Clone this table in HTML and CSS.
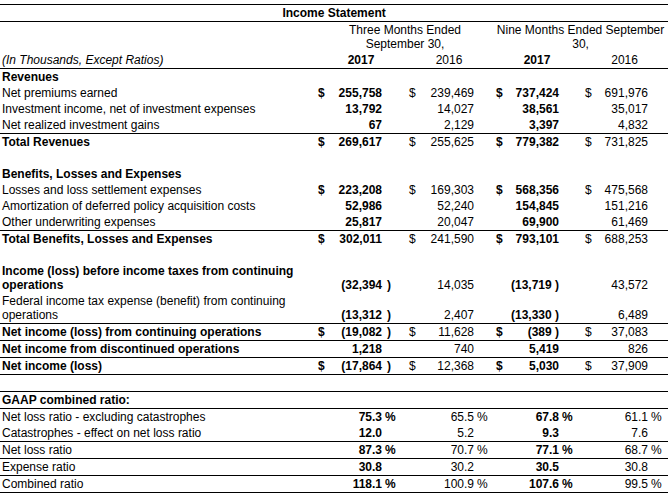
FILE: index.html
```html
<!DOCTYPE html>
<html>
<head>
<meta charset="utf-8">
<link rel="stylesheet" href="styles.css">
</head>
<body>
<table class="stmt">
<colgroup>
<col class="c-label"><col class="c-d1"><col class="c-n1"><col class="c-s1">
<col class="c-d2"><col class="c-n2"><col class="c-s2">
<col class="c-d3"><col class="c-n3"><col class="c-s3">
<col class="c-d4"><col class="c-n4"><col class="c-s4">
</colgroup>
<tbody>
<tr class="top rule"><td colspan="13" class="title">Income Statement</td></tr>
<tr><td class="label"></td><td colspan="6" class="period">Three Months Ended<br>September 30,</td><td colspan="6" class="period">Nine Months Ended September<br>30,</td></tr>
<tr class="rule"><td class="label units">(In Thousands, Except Ratios)</td><td colspan="3" class="year b">2017</td><td colspan="3" class="year">2016</td><td colspan="3" class="year b">2017</td><td colspan="3" class="year">2016</td></tr>

<tr class="b"><td class="label">Revenues</td><td colspan="12"></td></tr>
<tr><td class="label">Net premiums earned</td><td class="d d1 b">$</td><td class="n b">255,758</td><td class="s"></td><td class="d d2">$</td><td class="n">239,469</td><td class="s"></td><td class="d d3 b">$</td><td class="n b">737,424</td><td class="s"></td><td class="d d4">$</td><td class="n">691,976</td><td class="s"></td></tr>
<tr><td class="label">Investment income, net of investment expenses</td><td></td><td class="n b">13,792</td><td></td><td></td><td class="n">14,027</td><td></td><td></td><td class="n b">38,561</td><td></td><td></td><td class="n">35,017</td><td></td></tr>
<tr class="rule"><td class="label">Net realized investment gains</td><td></td><td class="n b">67</td><td></td><td></td><td class="n">2,129</td><td></td><td></td><td class="n b">3,397</td><td></td><td></td><td class="n">4,832</td><td></td></tr>
<tr><td class="label b">Total Revenues</td><td class="d d1 b">$</td><td class="n b">269,617</td><td></td><td class="d d2">$</td><td class="n">255,625</td><td></td><td class="d d3 b">$</td><td class="n b">779,382</td><td></td><td class="d d4">$</td><td class="n">731,825</td><td></td></tr>
<tr><td class="label">&nbsp;</td><td colspan="12"></td></tr>

<tr><td class="label b">Benefits, Losses and Expenses</td><td colspan="12"></td></tr>
<tr><td class="label">Losses and loss settlement expenses</td><td class="d d1 b">$</td><td class="n b">223,208</td><td></td><td class="d d2">$</td><td class="n">169,303</td><td></td><td class="d d3 b">$</td><td class="n b">568,356</td><td></td><td class="d d4">$</td><td class="n">475,568</td><td></td></tr>
<tr><td class="label">Amortization of deferred policy acquisition costs</td><td></td><td class="n b">52,986</td><td></td><td></td><td class="n">52,240</td><td></td><td></td><td class="n b">154,845</td><td></td><td></td><td class="n">151,216</td><td></td></tr>
<tr class="rule"><td class="label">Other underwriting expenses</td><td></td><td class="n b">25,817</td><td></td><td></td><td class="n">20,047</td><td></td><td></td><td class="n b">69,900</td><td></td><td></td><td class="n">61,469</td><td></td></tr>
<tr><td class="label b">Total Benefits, Losses and Expenses</td><td class="d d1 b">$</td><td class="n b">302,011</td><td></td><td class="d d2">$</td><td class="n">241,590</td><td></td><td class="d d3 b">$</td><td class="n b">793,101</td><td></td><td class="d d4">$</td><td class="n">688,253</td><td></td></tr>
<tr><td class="label">&nbsp;</td><td colspan="12"></td></tr>

<tr><td class="label b">Income (loss) before income taxes from continuing operations</td><td></td><td class="n b">(32,394</td><td class="s p b">)</td><td></td><td class="n">14,035</td><td></td><td></td><td class="n b">(13,719&nbsp;)</td><td></td><td></td><td class="n">43,572</td><td></td></tr>
<tr class="rule"><td class="label">Federal income tax expense (benefit) from continuing operations</td><td></td><td class="n b">(13,312</td><td class="s p b">)</td><td></td><td class="n">2,407</td><td></td><td></td><td class="n b">(13,330&nbsp;)</td><td></td><td></td><td class="n">6,489</td><td></td></tr>
<tr class="rule"><td class="label b">Net income (loss) from continuing operations</td><td class="d d1 b">$</td><td class="n b">(19,082</td><td class="s p b">)</td><td class="d d2">$</td><td class="n">11,628</td><td></td><td class="d d3 b">$</td><td class="n b">(389&nbsp;)</td><td></td><td class="d d4">$</td><td class="n">37,083</td><td></td></tr>
<tr class="rule"><td class="label b">Net income from discontinued operations</td><td></td><td class="n b">1,218</td><td></td><td></td><td class="n">740</td><td></td><td></td><td class="n b">5,419</td><td></td><td></td><td class="n">826</td><td></td></tr>
<tr class="rule"><td class="label b">Net income (loss)</td><td class="d d1 b">$</td><td class="n b">(17,864</td><td class="s p b">)</td><td class="d d2">$</td><td class="n">12,368</td><td></td><td class="d d3 b">$</td><td class="n b">5,030</td><td></td><td class="d d4">$</td><td class="n">37,909</td><td></td></tr>
<tr class="rule"><td class="label">&nbsp;</td><td colspan="12"></td></tr>

<tr class="rule"><td class="label b">GAAP combined ratio:</td><td colspan="12"></td></tr>
<tr><td class="label">Net loss ratio - excluding catastrophes</td><td></td><td class="n b">75.3</td><td class="s b">%</td><td></td><td class="n">65.5</td><td class="s">%</td><td></td><td class="n b">67.8</td><td class="s b">%</td><td></td><td class="n">61.1</td><td class="s">%</td></tr>
<tr class="rule"><td class="label">Catastrophes - effect on net loss ratio</td><td></td><td class="n b">12.0</td><td></td><td></td><td class="n">5.2</td><td></td><td></td><td class="n b">9.3</td><td></td><td></td><td class="n">7.6</td><td></td></tr>
<tr class="rule"><td class="label">Net loss ratio</td><td></td><td class="n b">87.3</td><td class="s b">%</td><td></td><td class="n">70.7</td><td class="s">%</td><td></td><td class="n b">77.1</td><td class="s b">%</td><td></td><td class="n">68.7</td><td class="s">%</td></tr>
<tr class="rule"><td class="label">Expense ratio</td><td></td><td class="n b">30.8</td><td></td><td></td><td class="n">30.2</td><td></td><td></td><td class="n b">30.5</td><td></td><td></td><td class="n">30.8</td><td></td></tr>
<tr class="rule"><td class="label">Combined ratio</td><td></td><td class="n b">118.1</td><td class="s b">%</td><td></td><td class="n">100.9</td><td class="s">%</td><td></td><td class="n b">107.6</td><td class="s b">%</td><td></td><td class="n">99.5</td><td class="s">%</td></tr>
</tbody>
</table>
</body>
</html>
```

FILE: styles.css
```css
html, body {
  margin: 0;
  padding: 0;
  background: #ffffff;
}

body {
  font-family: "Liberation Sans", Arial, sans-serif;
  font-size: 12px;
  color: #000000;
}

.stmt {
  border-collapse: collapse;
  table-layout: fixed;
  width: 668px;
  margin-top: 4px;
}

.c-label { width: 317px; }
.c-d1 { width: 12px; }
.c-n1 { width: 53px; }
.c-s1 { width: 23px; }
.c-d2 { width: 14px; }
.c-n2 { width: 55px; }
.c-s2 { width: 19px; }
.c-d3 { width: 14px; }
.c-n3 { width: 52px; }
.c-s3 { width: 22px; }
.c-d4 { width: 14px; }
.c-n4 { width: 53px; }
.c-s4 { width: 20px; }

.stmt td {
  padding: 1px 0;
  line-height: 14px;
  vertical-align: bottom;
  white-space: nowrap;
}

.stmt td.label {
  padding-left: 2px;
  white-space: normal;
}

.stmt tr.top > td {
  border-top: 1px solid #000000;
}

.stmt tr.rule > td {
  border-bottom: 1px solid #000000;
}

.b {
  font-weight: bold;
}

.title {
  text-align: center;
  font-weight: bold;
}

.period {
  text-align: center;
}

.year {
  text-align: center;
}

.units {
  font-style: italic;
}

.stmt td.n {
  text-align: right;
}

.stmt td.s {
  padding-left: 3px;
}

.stmt td.s.p {
  padding-left: 5px;
}

.stmt td.d1 { padding-left: 1px; }
.stmt td.d2 { padding-left: 4px; }
.stmt td.d3 { padding-left: 3px; }
.stmt td.d4 { padding-left: 4px; }
```
